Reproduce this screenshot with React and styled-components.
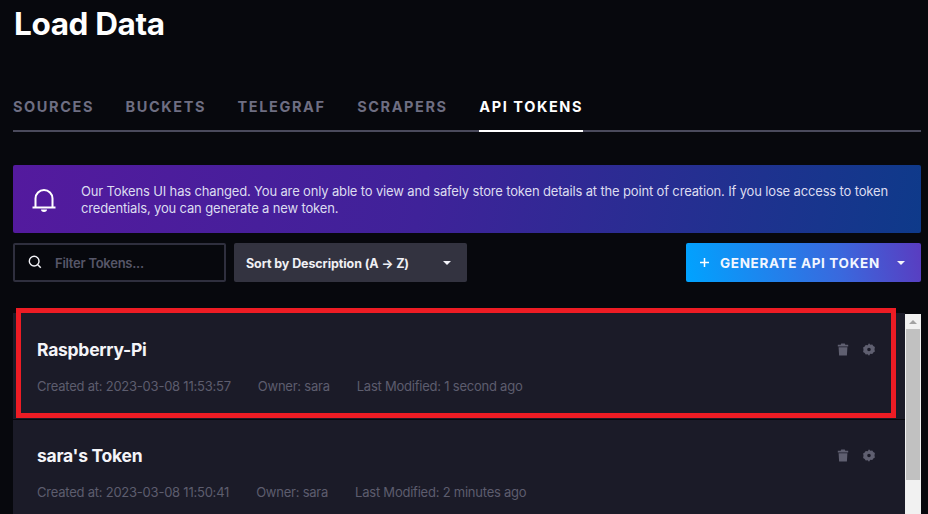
import React from 'react';
import styled, { createGlobalStyle } from 'styled-components';

const Global = createGlobalStyle`
  html, body { margin: 0; padding: 0; background: #07080d; overflow: hidden; }
  body { font-family: Inter, "Liberation Sans", sans-serif; }
`;
const Page = styled.div`
  width: 928px; height: 514px; overflow: hidden; box-sizing: border-box;
  padding: 7px 7px 0 13px; background: #07080d;
`;
const Title = styled.h1`
  margin: 0 0 0 1px; font-size: 31.5px; line-height: 34px; font-weight: 700; color: #fff; letter-spacing: -0.38px;
`;
const Tabs = styled.div`
  display: flex; gap: 32px; margin-top: 45px; height: 46px; box-sizing: border-box;
  border-bottom: 2px solid #4a4a5c;
`;
const Tab = styled.div`
  font-size: 14.5px; font-weight: 700; letter-spacing: 1.6px; line-height: 17px; padding-top: 12px;
  height: 46px; box-sizing: border-box; margin-right: -0.5px;
  color: ${p => (p.$active ? '#fff' : '#6e6e82')};
  border-bottom: ${p => (p.$active ? '2px solid #fff' : 'none')};
`;
const Alert = styled.div`
  display: flex; align-items: center; margin-top: 33px; height: 68px; box-sizing: border-box; padding: 1px 16px 0 19px;
  border-radius: 2px; background: linear-gradient(100deg, #541a9e 0%, #3f2299 45%, #0e3a8a 100%);
`;
const AlertIcon = styled.svg`
  width: 24px; height: 26px; flex: none; margin-right: 25px;
`;
const AlertText = styled.p`
  margin: 0; font-size: 13px; line-height: 17px; color: #dcdcf0; letter-spacing: -0.155px; font-weight: 400;
`;
const Controls = styled.div`
  display: flex; align-items: stretch; height: 39px; margin-top: 10px;
`;
const Filter = styled.div`
  display: flex; align-items: center; width: 213px; box-sizing: border-box; padding-left: 14px;
  border: 2px solid #2f2f3e; border-radius: 2px; background: #07080d;
`;
const FilterIcon = styled.svg`
  width: 14px; height: 14px; flex: none; margin-right: 13px; margin-left: -1px; margin-top: -1px;
`;
const Placeholder = styled.span`
  font-size: 13px; font-weight: 600; color: #565668; letter-spacing: -0.26px;
`;
const Sort = styled.div`
  display: flex; align-items: center; justify-content: space-between; width: 233px; margin-left: 8px;
  box-sizing: border-box; padding: 1px 16px 0 12px; border-radius: 2px; background: #333340;
  font-size: 12.5px; font-weight: 700; color: #f0f0f5; letter-spacing: -0.09px;
`;
const Caret = styled.span`
  width: 0; height: 0; border-left: 4.5px solid transparent; border-right: 4.5px solid transparent;
  border-top: 4.5px solid #f4f4fa;
`;
const Generate = styled.div`
  display: flex; align-items: center; width: 235px; margin-left: auto; box-sizing: border-box; padding: 0 16px 0 14px;
  border-radius: 2px; background: linear-gradient(80deg, #00a3ff 0%, #3a68dd 65%, #5a3cc0 100%);
  color: #f2f6ff; font-size: 13.5px; font-weight: 700; letter-spacing: 0.66px;
`;
const Plus = styled.svg`
  width: 9px; height: 9px; flex: none; margin-right: 11px;
`;
const GenerateLabel = styled.span`
  flex: 1; white-space: nowrap;
`;
const ListArea = styled.div`
  position: relative; display: flex; margin-top: 31px; height: 250px;
`;
const List = styled.div`
  flex: 1; display: flex; flex-direction: column; gap: 1px;
`;
const Card = styled.div`
  flex: none; height: 106px; box-sizing: border-box; position: relative; background: #1b1b28;
  padding: ${p => p.$top}px 16px 0 24px;
`;
const CardName = styled.div`
  font-size: 17.5px; line-height: 20px; font-weight: 700; color: #f4f4f8; letter-spacing: -0.26px;
`;
const Meta = styled.div`
  display: flex; gap: 27px; margin-top: 18px; font-size: 13px; line-height: 16px; color: #5d5d6e; letter-spacing: -0.23px;
`;
const CardIcons = styled.div`
  position: absolute; top: ${p => p.$top}px; right: 30px; display: flex; gap: 14px;
`;
const CardIcon = styled.svg`
  width: 12px; height: 13px; display: block;
`;
const Scrollbar = styled.div`
  flex: none; width: 16px; height: 200px; margin-top: 1px; background: #f1f1f1; display: flex; flex-direction: column; align-items: center; box-sizing: border-box; padding: 0 1px;
`;
const ScrollArrow = styled.span`
  margin: 6px 0 5px; width: 0; height: 0; border-left: 4px solid transparent; border-right: 4px solid transparent;
  border-bottom: 4px solid #a3a3a3;
`;
const ScrollThumb = styled.div`
  width: 100%; height: 151px; background: #c1c1c1;
`;
const Highlight = styled.div`
  position: absolute; left: 3px; top: -5px; width: 880px; height: 110px; box-sizing: border-box;
  border: 5px solid #ed1c24; pointer-events: none;
`;

const Trash = () => (
  <CardIcon viewBox="0 0 12 13"><path fill="#5f5f70" d="M4.2 0.5h3.6l.5 1.2H11.2v1.7H.8V1.7h2.9zM1.6 4.2h8.8l-.5 8.3H2.1z" /></CardIcon>
);
const Gear = () => (
  <CardIcon viewBox="0 0 12 13"><path fill="#5f5f70" fillRule="evenodd" d="M6 .2l1.3 1.5 2-.3 1 1.6 1.6 1-.4 2.5.4 2-1.6 1-1 1.6-2-.3L6 12.8l-1.3-1.5-2 .3-1-1.6-1.6-1 .4-2.5-.4-2 1.6-1 1-1.6 2 .3zM6 4.7a1.8 1.8 0 1 0 0 3.6 1.8 1.8 0 0 0 0-3.6z" /></CardIcon>
);

const tokens = [
  { name: 'Raspberry-Pi', created: '2023-03-08 11:53:57', modified: '1 second ago', top: 27, iconTop: 30 },
  { name: "sara's Token", created: '2023-03-08 11:50:41', modified: '2 minutes ago', top: 26, iconTop: 29 },
];

export default function App() {
  return (
    <Page>
      <Global />
      <Title>Load Data</Title>
      <Tabs>
        <Tab>SOURCES</Tab>
        <Tab>BUCKETS</Tab>
        <Tab>TELEGRAF</Tab>
        <Tab>SCRAPERS</Tab>
        <Tab $active>API TOKENS</Tab>
      </Tabs>
      <Alert>
        <AlertIcon viewBox="0 0 24 26" fill="none">
          <path d="M3.5 20V11.5a8.5 8.5 0 0 1 17 0V20" stroke="#fff" strokeWidth="2" />
          <path d="M0.5 20.5h23" stroke="#fff" strokeWidth="2" />
          <path d="M9 22.5h6a3 2.4 0 0 1-6 0z" fill="#fff" />
        </AlertIcon>
        <AlertText>
          Our Tokens UI has changed. You are only able to view and safely store token details at the point of creation. If you lose access to token credentials, you can generate a new token.
        </AlertText>
      </Alert>
      <Controls>
        <Filter>
          <FilterIcon viewBox="0 0 15 15" fill="none">
            <circle cx="6.6" cy="6.6" r="5.2" stroke="#f2f2f7" strokeWidth="1.5" />
            <path d="M10.5 10.5l3.2 3.2" stroke="#f2f2f7" strokeWidth="1.6" />
          </FilterIcon>
          <Placeholder>Filter Tokens...</Placeholder>
        </Filter>
        <Sort>
          <span>Sort by Description (A → Z)</span>
          <Caret />
        </Sort>
        <Generate>
          <Plus viewBox="0 0 9 9"><path d="M4.5 0v9M0 4.5h9" stroke="#fff" strokeWidth="1.5" /></Plus>
          <GenerateLabel>GENERATE API TOKEN</GenerateLabel>
          <Caret />
        </Generate>
      </Controls>
      <ListArea>
        <List>
          {tokens.map(t => (
            <Card key={t.name} $top={t.top}>
              <CardName>{t.name}</CardName>
              <Meta>
                <span>Created at: {t.created}</span>
                <span>Owner: sara</span>
                <span>Last Modified: {t.modified}</span>
              </Meta>
              <CardIcons $top={t.iconTop}><Trash /><Gear /></CardIcons>
            </Card>
          ))}
        </List>
        <Scrollbar><ScrollArrow /><ScrollThumb /></Scrollbar>
        <Highlight />
      </ListArea>
    </Page>
  );
}
